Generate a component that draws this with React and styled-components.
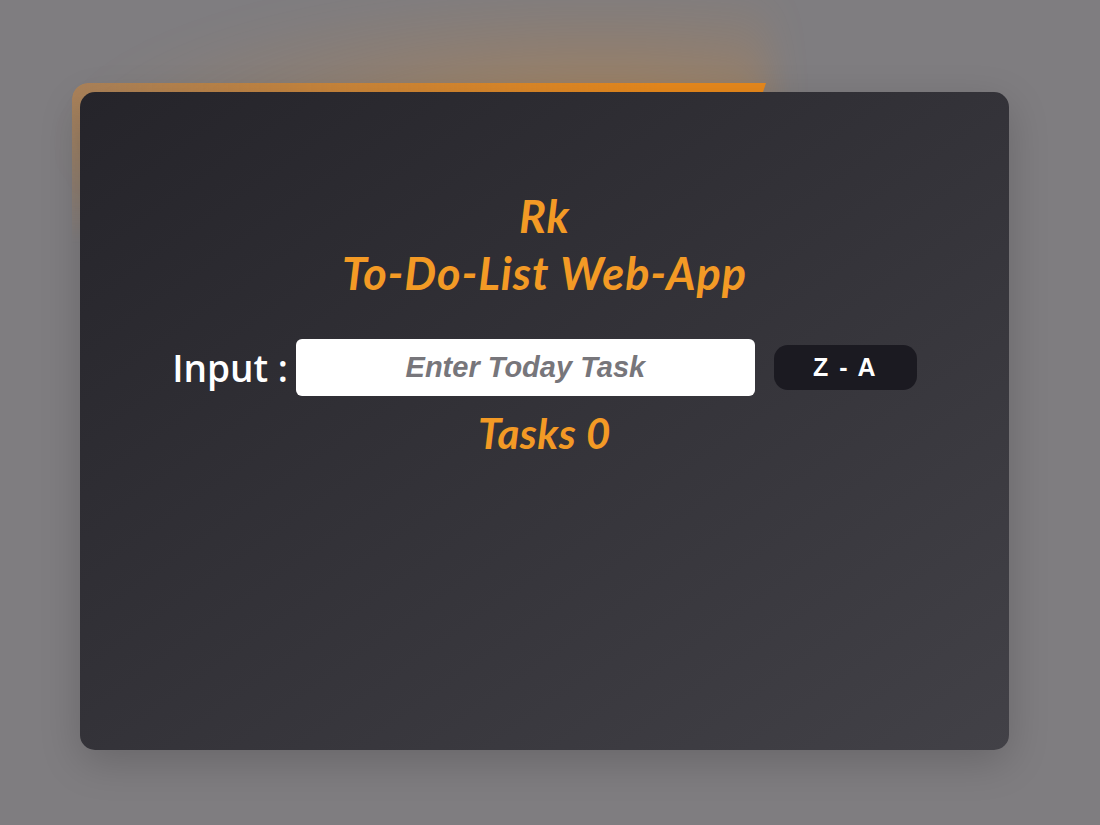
import styled, { createGlobalStyle } from 'styled-components'

const GlobalStyle = createGlobalStyle`
  html, body {
    margin: 0;
    padding: 0;
    background: #7f7d80;
  }
  body {
    font-family: "Lato", "Liberation Sans", sans-serif;
  }
`

function App() {
  return (
    <>
      <GlobalStyle />
      <Page>
        <Frame>
          <Card>
            <Heading>
              Rk
              <br />
              To-Do-List Web-App
            </Heading>
            <InputRow>
              <Label htmlFor="task">Input :</Label>
              <TaskInput id="task" type="text" placeholder="Enter Today Task" />
              <SortButton>Z - A</SortButton>
            </InputRow>
            <Count>Tasks 0</Count>
          </Card>
        </Frame>
      </Page>
    </>
  )
}

export default App

const Page = styled.div`
  width: 1100px;
  height: 825px;
  box-sizing: border-box;
  padding: 92px 0 0 80px;
  overflow: hidden;
`

const Frame = styled.div`
  position: relative;
  isolation: isolate;
  width: 929px;
  height: 658px;

  &::before {
    content: '';
    position: absolute;
    left: -8px;
    top: -9px;
    width: 694px;
    height: 170px;
    border-top-left-radius: 16px;
    background: linear-gradient(to right, rgba(205, 135, 60, 0.55), #e8891c 85%);
    clip-path: polygon(0 0, 100% 0, calc(100% - 3px) 9px, calc(100% - 3px) 100%, 0 100%);
    -webkit-mask-image: linear-gradient(to bottom, #000 12px, transparent 160px);
    mask-image: linear-gradient(to bottom, #000 12px, transparent 160px);
    z-index: -1;
  }

  &::after {
    content: '';
    position: absolute;
    left: -10px;
    top: -105px;
    width: 700px;
    height: 200px;
    background: radial-gradient(ellipse at 76% 78%, rgba(232, 137, 28, 0.42), rgba(232, 137, 28, 0.1) 50%, transparent 72%);
    filter: blur(18px);
    z-index: -2;
  }
`

const Card = styled.main`
  position: relative;
  box-sizing: border-box;
  width: 100%;
  height: 100%;
  border-radius: 15px;
  background: linear-gradient(to bottom right, #25242a, #35343a 55%, #424147);
  box-shadow: 0 12px 40px rgba(0, 0, 0, 0.18);
  display: flex;
  flex-direction: column;
  align-items: center;
  padding-top: 96px;
`

const Heading = styled.h1`
  margin: 0;
  font-family: "Lato", sans-serif;
  font-style: italic;
  font-weight: 700;
  font-size: 45px;
  letter-spacing: 1px;
  line-height: 57px;
  color: #f39a25;
  text-align: center;
`

const InputRow = styled.div`
  display: flex;
  align-items: center;
  margin-top: 37px;
`

const Label = styled.label`
  font-family: "Open Sans", sans-serif;
  font-weight: 600;
  font-size: 37px;
  color: #ffffff;
  margin-right: 8px;
`

const TaskInput = styled.input`
  box-sizing: border-box;
  width: 459px;
  height: 57px;
  border: none;
  border-radius: 6px;
  background: #ffffff;
  outline: none;
  text-align: center;
  font-family: "Liberation Sans", Arial, sans-serif;
  font-size: 29px;
  font-weight: 700;
  font-style: italic;
  color: #333;

  &::placeholder {
    color: #77767b;
  }
`

const SortButton = styled.button`
  box-sizing: border-box;
  width: 143px;
  height: 45px;
  margin-left: 19px;
  border: none;
  border-radius: 14px;
  background: #1b1a21;
  color: #ffffff;
  font-family: "Liberation Sans", Arial, sans-serif;
  font-weight: 700;
  font-size: 25px;
  letter-spacing: 2px;
  cursor: pointer;
`

const Count = styled.h2`
  margin: 12px 0 0;
  font-family: "Lato", sans-serif;
  font-style: italic;
  font-weight: 700;
  font-size: 42px;
  letter-spacing: 0.5px;
  line-height: 50px;
  color: #f39a25;
`
